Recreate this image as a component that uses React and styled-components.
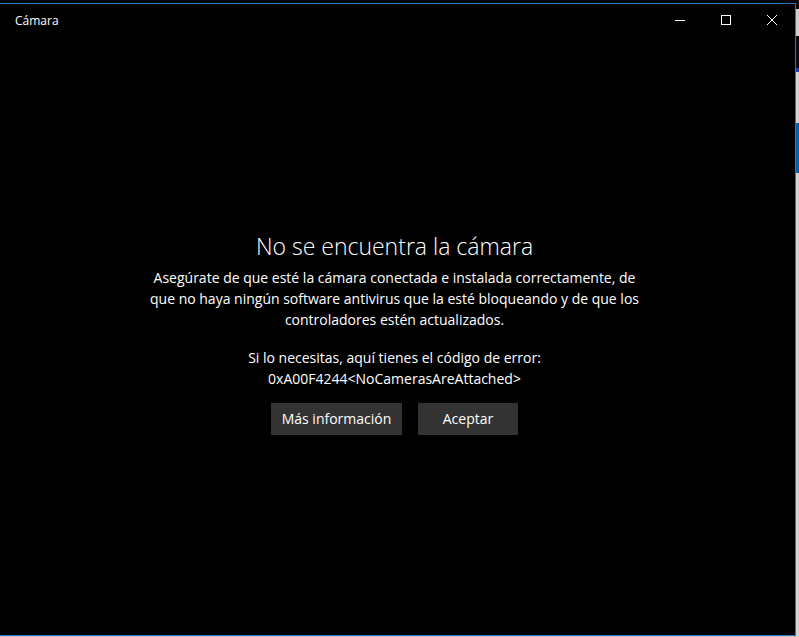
import React from 'react';
import styled, { createGlobalStyle } from 'styled-components';

const Global = createGlobalStyle`
  html, body { margin: 0; padding: 0; background: #000; }
  body { font-family: "Open Sans", "Noto Sans", "Liberation Sans", sans-serif; }
`;

const Screen = styled.div`
  display: flex;
  width: 799px;
  height: 637px;
  overflow: hidden;
`;

const WindowColumn = styled.div`
  display: flex;
  flex-direction: column;
  width: 796px;
`;

const TopGap = styled.div`
  height: 3px;
  background: #050505;
`;

const Window = styled.div`
  display: flex;
  flex-direction: column;
  height: 633px;
  box-sizing: border-box;
  background: #000;
  border: 1px solid #2b79c4;
  border-left: none;
`;

const BottomGap = styled.div`
  height: 1px;
  background: #c8c8c8;
`;

const TitleBar = styled.div`
  display: flex;
  align-items: center;
  height: 32px;
  color: #fff;
`;

const Title = styled.div`
  flex: 1;
  padding-left: 15px;
  font-size: 12px;
`;

const Control = styled.div`
  width: 46px;
  height: 32px;
  display: flex;
  align-items: center;
  justify-content: center;
`;

const Content = styled.div`
  flex: 1;
  display: flex;
  flex-direction: column;
  align-items: center;
  justify-content: center;
  color: #fff;
  text-align: center;
  padding: 0 6px 7px 0;
`;

const Heading = styled.h1`
  margin: 0 0 5px;
  font-size: 23px;
  font-weight: 300;
  line-height: 32px;
`;

const Paragraph = styled.p`
  margin: 0;
  width: 500px;
  font-size: 14px;
  line-height: 21px;
  margin-bottom: ${p => p.gap || 0}px;
`;

const Buttons = styled.div`
  display: flex;
  gap: 16px;
  margin-top: 14px;
`;

const Button = styled.button`
  height: 32px;
  min-width: ${p => p.min}px;
  padding: 0 10px;
  border: none;
  background: #333333;
  color: #fff;
  font-family: inherit;
  font-size: 14px;
`;

const Strip = styled.div`
  width: 3px;
  display: flex;
  flex-direction: column;
`;

const Band = styled.div`
  height: ${p => p.h}px;
  flex: ${p => (p.grow ? 1 : 'none')};
  background: ${p => p.c};
`;

export default function App() {
  return (
    <Screen>
      <Global />
      <WindowColumn>
        <TopGap />
        <Window>
          <TitleBar>
            <Title>Cámara</Title>
            <Control>
              <svg width="10" height="10" viewBox="0 0 10 10">
                <path d="M0 5.5H10" stroke="#fff" strokeWidth="1" />
              </svg>
            </Control>
            <Control>
              <svg width="10" height="10" viewBox="0 0 10 10">
                <rect x="0.5" y="0.5" width="9" height="9" fill="none" stroke="#fff" strokeWidth="1" />
              </svg>
            </Control>
            <Control>
              <svg width="10" height="10" viewBox="0 0 10 10">
                <path d="M0 0L10 10M10 0L0 10" stroke="#fff" strokeWidth="1" />
              </svg>
            </Control>
          </TitleBar>
          <Content>
            <Heading>No se encuentra la cámara</Heading>
            <Paragraph gap={17}>
              Asegúrate de que esté la cámara conectada e instalada correctamente, de que no haya ningún
              software antivirus que la esté bloqueando y de que los controladores estén actualizados.
            </Paragraph>
            <Paragraph>
              Si lo necesitas, aquí tienes el código de error:
              <br />
              0xA00F4244&lt;NoCamerasAreAttached&gt;
            </Paragraph>
            <Buttons>
              <Button min={131}>Más información</Button>
              <Button min={100}>Aceptar</Button>
            </Buttons>
          </Content>
        </Window>
        <BottomGap />
      </WindowColumn>
      <Strip>
        <Band h={9} c="#0a0a0a" />
        <Band h={27} c="#cfcfcf" />
        <Band h={32} c="#0a0a14" />
        <Band h={4} c="#1a3fbf" />
        <Band h={51} c="#d4d4d4" />
        <Band h={50} c="#0063b1" />
        <Band grow c="#d4d4d4" />
      </Strip>
    </Screen>
  );
}
